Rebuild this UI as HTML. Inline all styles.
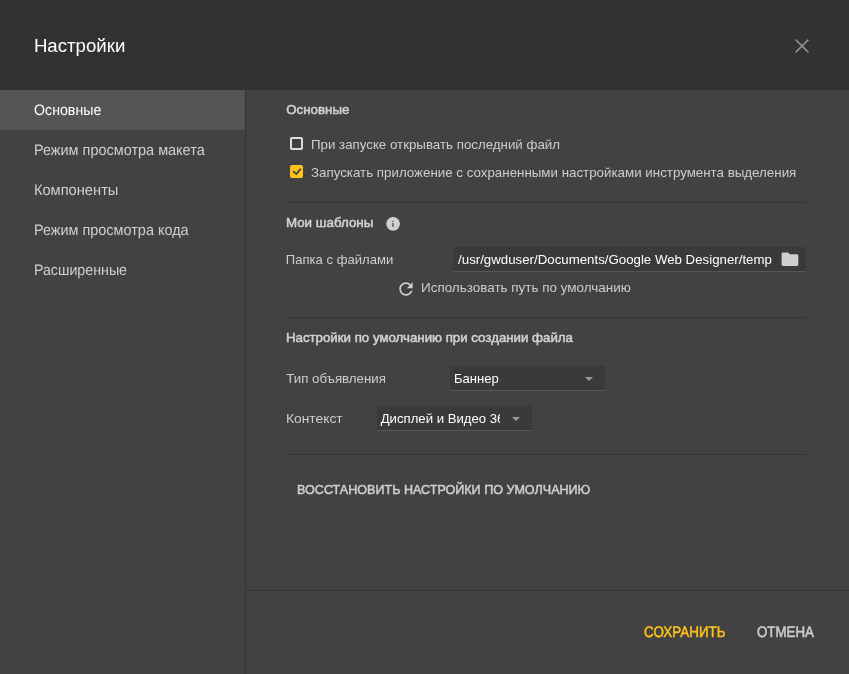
<!DOCTYPE html>
<html lang="ru">
<head>
<meta charset="utf-8">
<title>Настройки</title>
<style>
html,body{margin:0;padding:0;}
body{width:849px;height:674px;overflow:hidden;background:#424242;font-family:"Liberation Sans",sans-serif;color:#d0d0d0;position:relative;}
.abs{position:absolute;white-space:nowrap;line-height:1;}
#header{position:absolute;left:0;top:0;width:849px;height:90px;background:#323232;}
#sidebar{position:absolute;left:0;top:90px;width:245px;height:584px;background:#424242;border-right:1px solid #343434;}
.nav{position:absolute;left:0;width:245px;height:40px;}
.nav.sel{background:#555;}
.sx{transform-origin:0 50%;display:block;}
.hr{position:absolute;left:286px;width:520px;height:1px;background:#343434;}
.field{position:absolute;background:#3a3a3a;border-bottom:1px solid #565656;box-sizing:border-box;}
</style>
</head>
<body>
<div id="header">
<svg class="abs" style="left:795px;top:39px" width="14" height="14" viewBox="0 0 14 14"><path d="M0.6 0.6L13.4 13.4M13.4 0.6L0.6 13.4" stroke="#8c8c8c" stroke-width="1.7" fill="none"/></svg>
</div>
<div id="sidebar">
<div class="nav sel" style="top:0"></div>
</div>

<div class="abs" style="left:290px;top:137px;width:9px;height:9px;border:2px solid #dcdcdc;border-radius:2px;background:#3e3e3e"></div>
<div class="abs" style="left:290px;top:165px;width:13px;height:13px;background:#fdc31a;border-radius:2px;"><svg width="13" height="13" viewBox="0 0 13 13" style="display:block"><path d="M3.1 6.2L6.3 9.1L10.7 3.8" stroke="#3b3b48" stroke-width="1.7" fill="none"/></svg></div>
<div class="hr" style="top:202px"></div>

<svg class="abs" style="left:386px;top:217px" width="14" height="14" viewBox="0 0 14 14"><circle cx="7.1" cy="6.85" r="6.9" fill="#d0d0d0"/><rect x="6.1" y="6" width="1.7" height="4" fill="#6e6e6e"/><rect x="6.1" y="4" width="1.7" height="1.1" fill="#6e6e6e"/></svg>
<div class="field" style="left:453px;top:247px;width:353px;height:25px"></div>
<svg class="abs" style="left:781px;top:252px" width="18" height="15" viewBox="0 0 18 15"><path d="M2 0.5H7L8.8 2.3H15.9Q17.3 2.3 17.3 3.7V12.5Q17.3 13.9 15.9 13.9H2Q0.6 13.9 0.6 12.5V1.9Q0.6 0.5 2 0.5Z" fill="#cfcfcf"/></svg>
<svg class="abs" style="left:396px;top:279px" width="20" height="20" viewBox="0 0 24 24"><path d="M17.65 6.35C16.2 4.9 14.21 4 12 4c-4.42 0-7.99 3.58-7.99 8s3.57 8 7.99 8c3.73 0 6.84-2.55 7.73-6h-2.08c-.82 2.33-3.04 4-5.65 4-3.31 0-6-2.69-6-6s2.69-6 6-6c1.66 0 3.14.69 4.22 1.78L13 11h7V4l-2.35 2.35z" fill="#cfcfcf"/></svg>
<div class="hr" style="top:317px"></div>

<div class="field" style="left:450px;top:366px;width:155px;height:25px"></div>
<svg class="abs" style="left:585px;top:376.5px" width="8" height="4" viewBox="0 0 8 4"><path d="M0 0H8L4 4Z" fill="#9a9a9a"/></svg>
<div class="field" style="left:377px;top:406px;width:155px;height:25px"></div>
<svg class="abs" style="left:512px;top:416.5px" width="8" height="4" viewBox="0 0 8 4"><path d="M0 0H8L4 4Z" fill="#9a9a9a"/></svg>
<div class="hr" style="top:454px"></div>

<div class="abs" style="left:246px;top:590px;width:603px;height:1px;background:#333"></div>
<div id="txt" style="position:absolute;left:0;top:0;width:849px;height:674px;will-change:transform">
<div class="abs sx" id="title" style="left:33px;top:37.01px;font-size:18px;color:#fff;transform:translateX(0.90px) scaleX(1.0358);letter-spacing:0.000px;">Настройки</div>
<div class="abs sx" id="n1" style="left:34px;top:103.00px;font-size:15.2px;color:#fff;transform:translateX(0.10px) scaleX(0.9319);letter-spacing:0.000px;text-rendering:geometricPrecision;">Основные</div>
<div class="abs sx" id="n2" style="left:33px;top:143.00px;font-size:15.2px;color:#cfcfcf;transform:translateX(0.92px) scaleX(0.9527);letter-spacing:0.000px;text-rendering:geometricPrecision;">Режим просмотра макета</div>
<div class="abs sx" id="n3" style="left:33px;top:183.00px;font-size:15.2px;color:#cfcfcf;transform:translateX(0.88px) scaleX(0.9658);letter-spacing:0.000px;text-rendering:geometricPrecision;">Компоненты</div>
<div class="abs sx" id="n4" style="left:33px;top:223.00px;font-size:15.2px;color:#cfcfcf;transform:translateX(0.90px) scaleX(0.9514);letter-spacing:0.000px;text-rendering:geometricPrecision;">Режим просмотра кода</div>
<div class="abs sx" id="n5" style="left:33px;top:263.00px;font-size:15.2px;color:#cfcfcf;transform:translateX(0.92px) scaleX(0.9370);letter-spacing:0.000px;text-rendering:geometricPrecision;">Расширенные</div>
<div class="abs sx" id="h1" style="left:286px;top:104.01px;font-size:12.7px;color:#d2d2d2;-webkit-text-stroke:0.5px #d2d2d2;transform:translateX(0.23px) scaleX(1.0483);letter-spacing:0.000px;">Основные</div>
<div class="abs sx" id="c1" style="left:310px;top:139.00px;font-size:12.8px;color:#cdcdcd;transform:translateX(0.95px) scaleX(1.0395);letter-spacing:0.000px;">При запуске открывать последний файл</div>
<div class="abs sx" id="c2" style="left:310px;top:167.00px;font-size:12.8px;color:#cdcdcd;transform:translateX(0.95px) scaleX(1.0416);letter-spacing:0.000px;">Запускать приложение с сохраненными настройками инструмента выделения</div>
<div class="abs sx" id="h2" style="left:285px;top:217.01px;font-size:12.7px;color:#d2d2d2;-webkit-text-stroke:0.5px #d2d2d2;transform:translateX(0.91px) scaleX(1.0526);letter-spacing:0.000px;">Мои шаблоны</div>
<div class="abs sx" id="l1" style="left:285px;top:254.00px;font-size:12.8px;color:#cdcdcd;transform:translateX(0.86px) scaleX(1.0217);letter-spacing:0.000px;">Папка с файлами</div>
<div class="abs sx" id="p1" style="left:458px;top:254.00px;font-size:12.8px;color:#fff;transform:translateX(0.08px) scaleX(1.0364);letter-spacing:0.000px;">/usr/gwduser/Documents/Google Web Designer/temp</div>
<div class="abs sx" id="u1" style="left:420px;top:282.00px;font-size:12.8px;color:#cdcdcd;transform:translateX(1.00px) scaleX(1.0513);letter-spacing:0.000px;">Использовать путь по умолчанию</div>
<div class="abs sx" id="h3" style="left:285px;top:332.01px;font-size:12.7px;color:#d2d2d2;-webkit-text-stroke:0.5px #d2d2d2;transform:translateX(0.92px) scaleX(1.0455);letter-spacing:0.000px;">Настройки по умолчанию при создании файла</div>
<div class="abs sx" id="l2" style="left:286px;top:373.00px;font-size:12.8px;color:#cdcdcd;transform:translateX(0.18px) scaleX(1.0387);letter-spacing:0.000px;">Тип объявления</div>
<div class="abs sx" id="s1" style="left:453px;top:373.00px;font-size:12.8px;color:#fff;transform:translateX(0.92px) scaleX(1.0192);letter-spacing:0.000px;">Баннер</div>
<div class="abs sx" id="l3" style="left:285px;top:413.00px;font-size:12.8px;color:#cdcdcd;transform:translateX(0.90px) scaleX(1.0817);letter-spacing:0.000px;">Контекст</div>
<div class="abs" id="s2" style="left:380px;top:413.00px;font-size:12.8px;color:#fff;width:119.50px;overflow:hidden;"><span class="sx" style="transform:translateX(0.71px) scaleX(1.0280);letter-spacing:0.000px;">Дисплей и Видео 360</span></div>
<div class="abs sx" id="r1" style="left:297px;top:484.00px;font-size:12.8px;color:#cfcfcf;-webkit-text-stroke:0.5px #cfcfcf;transform:translateX(0.11px) scaleX(0.9818);letter-spacing:0.000px;">ВОССТАНОВИТЬ НАСТРОЙКИ ПО УМОЛЧАНИЮ</div>
<div class="abs sx" id="b1" style="left:644px;top:625.00px;font-size:15.2px;color:#fdc31a;-webkit-text-stroke:0.5px #fdc31a;transform:translateX(0.04px) scaleX(0.8835);letter-spacing:0.000px;text-rendering:geometricPrecision;">СОХРАНИТЬ</div>
<div class="abs sx" id="b2" style="left:757px;top:625.00px;font-size:15.2px;color:#cfcfcf;-webkit-text-stroke:0.5px #cfcfcf;transform:translateX(0.00px) scaleX(0.8769);letter-spacing:0.000px;text-rendering:geometricPrecision;">ОТМЕНА</div>
</div>
</body>
</html>
